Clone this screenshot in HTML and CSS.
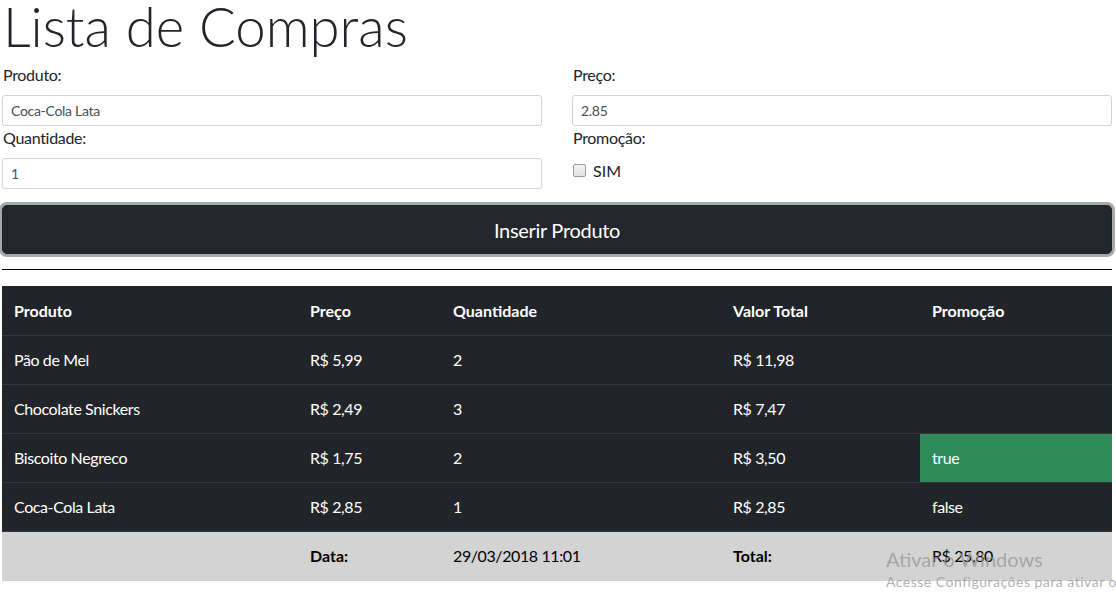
FILE: index.html
```html
<!DOCTYPE html>
<html lang="pt-BR">
<head>
<meta charset="utf-8">
<title>Lista de Compras</title>
<link rel="stylesheet" href="styles.css">
</head>
<body>
<div class="page">
  <h1 class="title">Lista de Compras</h1>
  <form class="form">
    <div class="field">
      <label class="label">Produto:</label>
      <input class="input" type="text" value="Coca-Cola Lata">
    </div>
    <div class="field">
      <label class="label">Preço:</label>
      <input class="input" type="text" value="2.85">
    </div>
    <div class="field">
      <label class="label">Quantidade:</label>
      <input class="input" type="text" value="1">
    </div>
    <div class="field">
      <label class="label">Promoção:</label>
      <div class="check"><span class="box"></span><span class="check-text">SIM</span></div>
    </div>
  </form>
  <button class="btn" type="button">Inserir Produto</button>
  <hr class="rule">
  <table class="table">
    <colgroup>
      <col class="c1"><col class="c2"><col class="c3"><col class="c4"><col class="c5">
    </colgroup>
    <thead>
      <tr><th>Produto</th><th>Preço</th><th>Quantidade</th><th>Valor Total</th><th>Promoção</th></tr>
    </thead>
    <tbody>
      <tr><td>Pão de Mel</td><td>R$ 5,99</td><td>2</td><td>R$ 11,98</td><td></td></tr>
      <tr><td>Chocolate Snickers</td><td>R$ 2,49</td><td>3</td><td>R$ 7,47</td><td></td></tr>
      <tr><td>Biscoito Negreco</td><td>R$ 1,75</td><td>2</td><td>R$ 3,50</td><td class="promo">true</td></tr>
      <tr><td>Coca-Cola Lata</td><td>R$ 2,85</td><td>1</td><td>R$ 2,85</td><td>false</td></tr>
    </tbody>
    <tfoot>
      <tr><td></td><th>Data:</th><td>29/03/2018 11:01</td><th>Total:</th><td>R$ 25,80</td></tr>
    </tfoot>
  </table>
</div>
<div class="watermark">
  <div class="wm-title">Ativar o Windows</div>
  <div class="wm-sub">Acesse Configurações para ativar o Windows.</div>
</div>
</body>
</html>
```

FILE: styles.css
```css
* { box-sizing: border-box; }
html, body { margin: 0; padding: 0; background: #fff; overflow: hidden; }
body {
  font-family: Lato, "Open Sans", sans-serif;
  font-size: 16px;
  color: #212529;
  width: 1116px;
  height: 594px;
  position: relative;
}
.page { padding: 0 4px 0 2px; }
.title {
  margin: 0;
  font-size: 54.5px;
  font-weight: 300;
  line-height: 52px;
  height: 52px;
  padding-left: 1px;
  white-space: nowrap;
  color: #212529;
}
.form {
  display: grid;
  grid-template-columns: 540px 540px;
  column-gap: 30px;
  margin-top: 11px;
}
.label {
  display: block;
  line-height: 24px;
  margin-bottom: 8px;
  padding-left: 1px;
  letter-spacing: -0.3px;
}
.input {
  display: block;
  width: 100%;
  height: 31px;
  padding: 4px 8px;
  font-family: inherit;
  font-size: 14px;
  letter-spacing: -0.3px;
  color: #495057;
  border: 1px solid #ced4da;
  border-radius: 3px;
  background: #fff;
  margin: 0;
}
.check {
  display: flex;
  align-items: center;
  height: 24px;
  padding-left: 1px;
}
.box {
  width: 13px;
  height: 13px;
  border: 1px solid #9a9a9a;
  border-radius: 2px;
  background: linear-gradient(#f4f4f4, #e2e2e2);
}
.check-text { margin-left: 7px; }
.btn {
  display: block;
  width: 1110px;
  height: 49px;
  margin-top: 16px;
  background: #23272b;
  color: #fff;
  font-family: inherit;
  font-size: 20px;
  letter-spacing: -0.3px;
  border: 1px solid #1d2124;
  border-radius: 5px;
  box-shadow: 0 0 0 3px #a6a9ac;
  padding: 0;
}
.rule {
  margin: 15px 0 16px;
  border: 0;
  border-top: 1px solid #000;
  width: 1110px;
}
.table {
  width: 1110px;
  border-collapse: collapse;
  table-layout: fixed;
  background: #212529;
  color: #fff;
}
.c1 { width: 296px; }
.c2 { width: 143px; }
.c3 { width: 280px; }
.c4 { width: 199px; }
.c5 { width: 192px; }
.table th, .table td {
  text-align: left;
  padding: 12px;
  line-height: 24px;
  height: 49px;
  border-top: 1px solid #32383e;
  vertical-align: top;
  letter-spacing: -0.4px;
}
.table thead th { border-top: 0; height: 49px; padding-top: 13px; }
.table th { font-weight: 700; letter-spacing: 0; }
.table .promo { background: #2e8b57; }
.table tfoot td, .table tfoot th {
  background: #d3d3d3;
  color: #000;
}
.watermark {
  position: absolute;
  left: 886px;
  right: 0;
  top: 546px;
  overflow: hidden;
  color: rgba(150, 150, 150, 0.75);
  white-space: nowrap;
  pointer-events: none;
}
.wm-title { font-size: 20px; line-height: 26px; }
.wm-sub { font-size: 14px; line-height: 20px; letter-spacing: 0.5px; }
```
